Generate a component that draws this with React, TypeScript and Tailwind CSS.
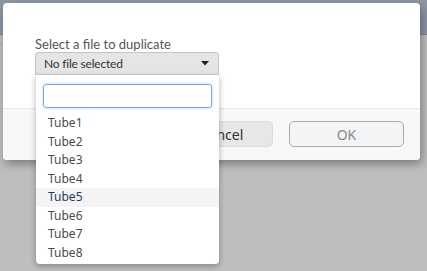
const files = ["Tube1", "Tube2", "Tube3", "Tube4", "Tube5", "Tube6", "Tube7", "Tube8"]

export default function App() {
  return (
    <div className="relative w-[427px] h-[271px] overflow-hidden bg-[#bebebe] font-['Lato','Liberation_Sans',sans-serif]">
      {/* app behind the modal */}
      <div className="h-[35px] bg-[#8c97a4] border-b border-[#7d8793]" />
      <div className="absolute left-0 top-[43px] w-[3px] h-px bg-[#a5a5a5]" />

      {/* Dialog */}
      <div className="absolute left-[3px] top-[3px] w-[417px] h-[157px] rounded-[4px] bg-white shadow-[2px_4px_10px_rgba(0,0,0,0.35)] flex flex-col">
        <div className="h-[105px] pt-[33px] pl-[32px]">
          <div className="text-[13px] leading-[16px] text-[#555]">Select a file to duplicate</div>
          <div className="relative w-[184px]">
            <div className="h-[23px] flex items-center justify-between pl-[8px] pr-[9px] rounded-t-[4px] bg-[#e5e5e5] border border-[#c4c4c4] border-b-[#d0d0d0] text-[12px] tracking-[-0.2px] text-[#333]">
              <span>No file selected</span>
              <svg width="8" height="5" viewBox="0 0 8 5">
                <path d="M0 0h8L4 4.5z" fill="#222" />
              </svg>
            </div>

            {/* Dropdown */}
            <div className="absolute left-[1px] top-full w-[183px] z-10 bg-white rounded-b-[4px] shadow-[0_2px_6px_rgba(0,0,0,0.3)] pt-[9px] pb-[2px]">
              <div className="px-[7px]">
                <div className="h-[24px] rounded-[3px] border border-[#7ea6ec] shadow-[0_0_3px_rgba(90,140,230,0.45)]" />
              </div>
              <div className="mt-[6px] font-['Noto_Sans','Open_Sans',sans-serif]">
                {files.map((f) => (
                  <div
                    key={f}
                    className={`h-[18.5px] leading-[18.5px] pl-[12px] text-[12px] ${
                      f === "Tube5" ? "bg-[#f4f4f4] text-[#1d3c66]" : "text-[#4a4a4a]"
                    }`}
                  >
                    {f}
                  </div>
                ))}
              </div>
            </div>
          </div>
        </div>

        {/* Footer */}
        <div className="flex-1 border-t border-[#e6e8ec] bg-[#f7f8fa] rounded-b-[4px] flex justify-end gap-[16px] pt-[12px] pr-[16px] font-['Noto_Sans','Open_Sans',sans-serif]">
          <button className="w-[115px] h-[26px] rounded-[5px] bg-[#e7e7e7] border border-[#dcdcdc] text-[14px] text-[#333] pl-[12px]">
            Cancel
          </button>
          <button className="w-[115px] h-[26px] rounded-[5px] bg-[#f3f4f6] border border-[#a9a9a9] text-[14px] text-[#888]">
            OK
          </button>
        </div>
      </div>
    </div>
  )
}
